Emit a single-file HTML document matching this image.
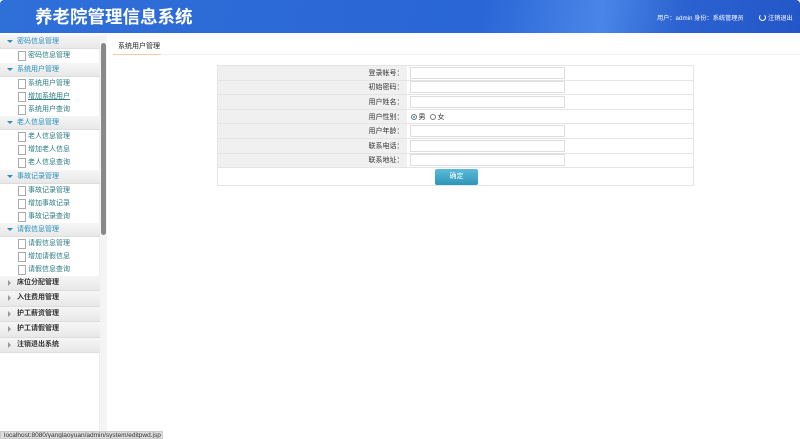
<!DOCTYPE html>
<html><head><meta charset="utf-8"><style>
*{margin:0;padding:0;box-sizing:border-box}
body{width:800px;height:439px;overflow:hidden;background:#fff;font-family:"Liberation Sans","Noto Sans CJK SC",sans-serif;font-size:7px;color:#333;position:relative}
#hd{position:absolute;left:0;top:0;width:800px;height:33px;background:linear-gradient(100deg,#2f6fd8 0%,#2a66d6 60%,#4a86e8 75%,#2b62d0 85%,#2456c8 100%);border-radius:4px 4px 0 0}
#hd h1{position:absolute;left:35px;top:7px;font-size:17.5px;line-height:20px;color:#fff;font-weight:bold;font-family:"Liberation Sans","Noto Sans CJK SC",sans-serif}
#hd .u{position:absolute;left:657px;top:13px;color:#fff;font-size:6.2px;white-space:nowrap}
#hd .o{position:absolute;left:768px;top:13px;color:#fff;font-size:6.2px}
#hd .p{position:absolute;left:759px;top:14px;width:7px;height:7px;border:1.2px solid #fff;border-radius:50%;border-top-color:transparent}
#side{position:absolute;left:0;top:35px;width:100px;height:396px;background:#fff;border-right:1px solid #eee}
.h{position:absolute;left:0;width:100px;height:14px;background:linear-gradient(#f6f6f6,#e8e8e8);border-bottom:1px solid #ddd;color:#2a8fc0;padding-left:17px;line-height:13px}
.h:before{content:"";position:absolute;left:7px;top:5px;border-left:3px solid transparent;border-right:3px solid transparent;border-top:3px solid #2a8fc0}
.c{color:#333;font-weight:bold}
.c:before{border:0;border-top:3px solid transparent;border-bottom:3px solid transparent;border-left:3px solid #999;left:8px;top:4px}
.i{position:absolute;left:18px;height:13px;line-height:13px;color:#2a7a80;padding-left:10px}
.i:before{content:"";position:absolute;left:0;top:2px;width:6px;height:8px;border:1px solid #aaa;background:#fff}
#sb{position:absolute;left:100px;top:35px;width:7px;height:396px;background:#f4f4f4}
#sb div{position:absolute;left:1px;top:8px;width:5px;height:192px;background:#888;border-radius:3px}
#tab{position:absolute;left:113px;top:41px;width:48px;height:14px;border-bottom:1px solid #f5c9a8;color:#222;line-height:12px;padding-left:5px;font-size:7px}
#tl{position:absolute;left:161px;top:54px;width:639px;height:1px;background:#f0f0f0}
table{position:absolute;left:217px;top:65px;width:477px;border-collapse:collapse;border:1px solid #e4e4e4}
td{border-bottom:1px solid #e4e4e4;height:14.6px;font-size:7px}
td.l{background:#f0f0f0;width:189px;text-align:right;padding-right:3px}
td input{display:block;width:155px;height:12px;border:1px solid #ddd;margin-left:3px}
.r{display:inline-block;width:6px;height:6px;border:1px solid #777;border-radius:50%;vertical-align:middle;margin:0 2px 0 4px}
.btn{display:block;margin-left:217px;width:43px;height:16px;background:linear-gradient(#5cbbd6,#2d95bb);color:#fff;text-align:center;line-height:16px;border-radius:2px}
#st{position:absolute;left:0;top:431px;width:163px;height:8px;background:#ddd;border:1px solid #ccc;font-size:6.5px;line-height:7px;color:#333;padding-left:3px;overflow:hidden;white-space:nowrap}
</style></head><body>
<div id="hd"><h1>养老院管理信息系统</h1><div class="u">用户：admin 身份：系统管理员</div><div class="p"></div><div class="o">注销退出</div></div>
<div id="side">
<div class="h" style="top:0">密码信息管理</div>
<div class="i" style="top:14px">密码信息管理</div>
<div class="h" style="top:28px">系统用户管理</div>
<div class="i" style="top:42px">系统用户管理</div>
<div class="i" style="top:55px;text-decoration:underline">增加系统用户</div>
<div class="i" style="top:68px">系统用户查询</div>
<div class="h" style="top:81px">老人信息管理</div>
<div class="i" style="top:95px">老人信息管理</div>
<div class="i" style="top:108px">增加老人信息</div>
<div class="i" style="top:121px">老人信息查询</div>
<div class="h" style="top:135px">事故记录管理</div>
<div class="i" style="top:149px">事故记录管理</div>
<div class="i" style="top:162px">增加事故记录</div>
<div class="i" style="top:175px">事故记录查询</div>
<div class="h" style="top:188px">请假信息管理</div>
<div class="i" style="top:202px">请假信息管理</div>
<div class="i" style="top:215px">增加请假信息</div>
<div class="i" style="top:228px">请假信息查询</div>
<div class="h c" style="top:241px;height:15px">床位分配管理</div>
<div class="h c" style="top:256px;height:16px">入住费用管理</div>
<div class="h c" style="top:272px;height:15px">护工薪资管理</div>
<div class="h c" style="top:287px;height:16px">护工请假管理</div>
<div class="h c" style="top:303px;height:15px">注销退出系统</div>
</div>
<div id="sb"><div></div></div>
<div id="tab">系统用户管理</div><div id="tl"></div>
<table>
<tr><td class="l">登录帐号：</td><td><input></td></tr>
<tr><td class="l">初始密码：</td><td><input></td></tr>
<tr><td class="l">用户姓名：</td><td><input></td></tr>
<tr><td class="l">用户性别：</td><td><span class="r" style="background:#3a9fc0;box-shadow:inset 0 0 0 1px #fff"></span>男<span class="r"></span>女</td></tr>
<tr><td class="l">用户年龄：</td><td><input></td></tr>
<tr><td class="l">联系电话：</td><td><input></td></tr>
<tr><td class="l">联系地址：</td><td><input></td></tr>
<tr><td colspan="2" style="height:18px"><span class="btn">确定</span></td></tr>
</table>
<div id="st">localhost:8080/yanglaoyuan/admin/system/editpwd.jsp</div>
</body></html>
